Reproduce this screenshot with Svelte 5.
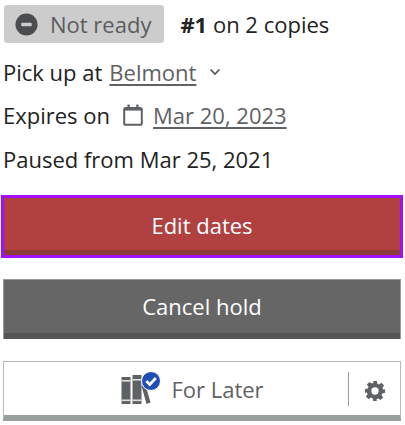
<script>
	let primary = 'Edit dates';
	let secondary = 'Cancel hold';
</script>

<main>
	<div class="status">
		<span class="badge">
			<svg class="minus" viewBox="0 0 24 24" aria-hidden="true">
				<circle cx="12" cy="12" r="11.500" fill="#4a4d4f" />
				<rect x="6.500" y="10.300" width="11" height="3.400" rx="1" fill="#ccc" />
			</svg>
			Not ready
		</span>
		<span class="queue"><b>#1</b> on 2 copies</span>
	</div>

	<p class="line pickup">
		<span>Pick up at</span>
		<a href="#belmont">Belmont</a>
		<svg class="chevron" viewBox="0 0 12 8" aria-hidden="true">
			<path d="M1.500 1.500 L6 6 L10.500 1.500" fill="none" stroke="#555" stroke-width="1.700" />
		</svg>
	</p>

	<p class="line expires">
		<span>Expires on</span>
		<svg class="calendar" viewBox="0 0 20 22" aria-hidden="true">
			<rect x="1.200" y="4" width="17.600" height="16.800" rx="1.600" fill="none" stroke="#5f6264" stroke-width="2" />
			<rect x="4.400" y="0.600" width="2.400" height="5" fill="#5f6264" />
			<rect x="13.200" y="0.600" width="2.400" height="5" fill="#5f6264" />
			<rect x="1.200" y="4" width="17.600" height="2.600" fill="#5f6264" />
		</svg>
		<a href="#expiry">Mar 20, 2023</a>
	</p>

	<p class="line paused">Paused from Mar 25, 2021</p>

	<div class="actions">
		<button class="btn danger">{primary}</button>
		<button class="btn grey">{secondary}</button>
	</div>

	<div class="shelf">
		<div class="shelf-main">
			<svg class="books" viewBox="0 0 40 36" aria-hidden="true">
				<rect x="1" y="6" width="9" height="27" fill="#5f6264" />
				<rect x="12" y="4" width="9" height="29" fill="#5f6264" />
				<rect x="1" y="9" width="9" height="1.600" fill="#ddd" />
				<rect x="1" y="28.500" width="9" height="1.600" fill="#ddd" />
				<rect x="12" y="8" width="9" height="1.600" fill="#ddd" />
				<rect x="12" y="28.500" width="9" height="1.600" fill="#ddd" />
				<path d="M21 15 L25 14 L30 31.500 L26 33 Z" fill="#5f6264" />
				<circle cx="30.500" cy="10" r="9.500" fill="#1f4fb5" stroke="#fff" stroke-width="1" />
				<path d="M25.800 10 L29.300 13.500 L35.300 7" fill="none" stroke="#fff" stroke-width="2.600" />
			</svg>
			<span>For Later</span>
		</div>
		<div class="shelf-gear">
			<svg class="gear" viewBox="0 0 24 24" aria-hidden="true">
				<path fill="#5f6264" fill-rule="evenodd" d="M10 1h4l.6 3.100 1.900.8 2.600-1.800 2.800 2.800-1.800 2.600.8 1.900L23 10v4l-3.100.6-.8 1.900 1.800 2.600-2.800 2.800-2.600-1.800-1.900.8L14 23h-4l-.6-3.100-1.900-.8-2.600 1.800-2.800-2.800 1.800-2.600-.8-1.900L1 14v-4l3.100-.6.8-1.900-1.800-2.600 2.800-2.800 2.600 1.800 1.900-.8z M12 8a4 4 0 1 0 0 8a4 4 0 0 0 0-8z" />
			</svg>
		</div>
	</div>
</main>

<style>
	:global(body) {
		background: #fff;
	}

	main {
		font-family: "Open Sans", "Noto Sans", sans-serif;
		font-size: 22px;
		color: #222;
		padding: 5px 4px 0 3px;
	}

	.status {
		display: flex;
		align-items: center;
		gap: 16px;
	}

	.badge {
		display: flex;
		align-items: center;
		gap: 12px;
		height: 38px;
		margin-left: 1px;
		padding: 0 13px 0 11px;
		border-radius: 3px;
		background: #ccc;
		color: #5a5d5f;
	}

	.minus {
		width: 23px;
		height: 23px;
	}

	.queue b {
		font-weight: 700;
	}

	.line {
		margin: 0;
		display: flex;
		align-items: center;
		height: 27px;
	}

	.pickup {
		margin-top: 15px;
		gap: 7px;
	}

	.expires {
		margin-top: 16px;
		gap: 13px;
	}

	.paused {
		margin-top: 17px;
	}

	a {
		color: #5f6264;
		text-decoration: underline;
		text-underline-offset: 3px;
	}

	.chevron {
		width: 12px;
		height: 8px;
		margin-left: 6px;
	}

	.calendar {
		width: 20px;
		height: 22px;
		margin-right: -3px;
	}

	.actions {
		display: flex;
		flex-direction: column;
		margin-top: 26px;
	}

	.btn {
		display: block;
		border: 0;
		font: inherit;
		color: #fff;
		box-sizing: border-box;
	}

	.danger {
		height: 57px;
		margin: 0 1px 24px;
		padding-top: 2px;
		background: #b14141;
		border-bottom: 5px solid #8c3a3a;
		outline: 3px solid #a010ff;
	}

	.grey {
		height: 60px;
		padding-bottom: 8px;
		background: #666;
		border: 1px solid #999;
		border-bottom: 0;
		box-shadow: inset 0 -6px 0 #555;
	}

	.shelf {
		display: flex;
		align-items: center;
		height: 60px;
		margin-top: 22px;
		border: 1px solid #b5b9b9;
		border-bottom: 6px solid #999e9e;
		box-sizing: border-box;
	}

	.shelf-main {
		flex: 1;
		display: flex;
		align-items: center;
		justify-content: center;
		gap: 10px;
		padding-left: 32px;
		color: #5f6264;
	}

	.books {
		width: 41px;
		height: 36px;
	}

	.shelf-gear {
		display: flex;
		align-items: center;
		justify-content: center;
		width: 51px;
		height: 34px;
		border-left: 1px solid #999;
	}

	.gear {
		width: 22px;
		height: 22px;
		margin-top: 4px;
	}
</style>
